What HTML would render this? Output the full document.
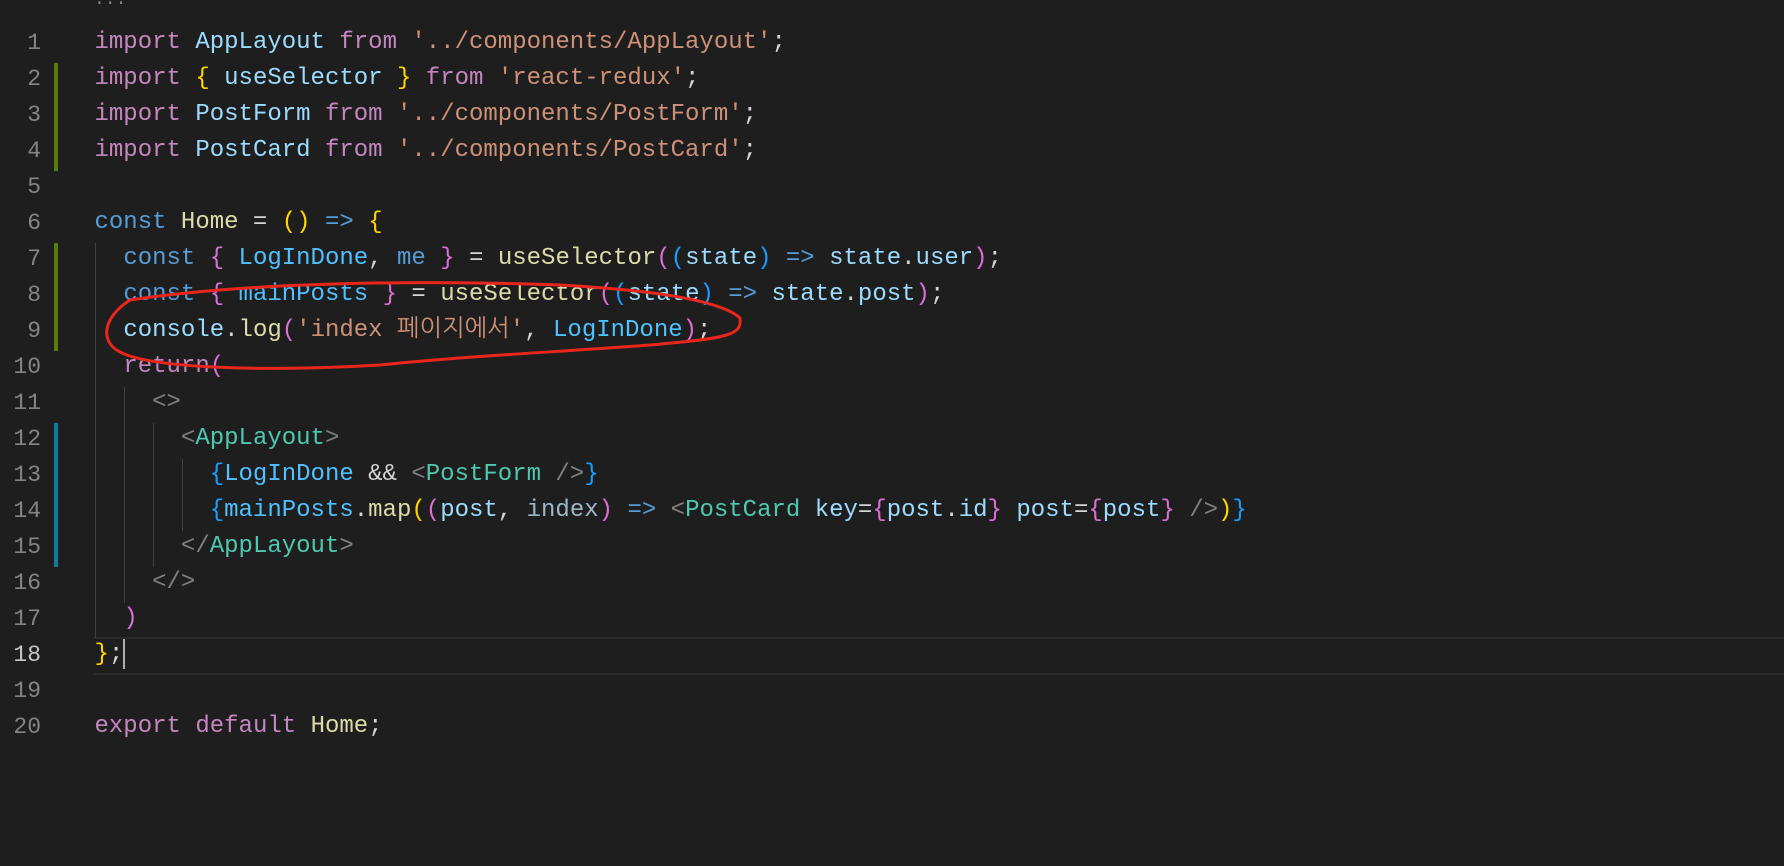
<!DOCTYPE html>
<html><head><meta charset="utf-8"><style>
html,body{margin:0;padding:0;background:#1e1e1e;width:1784px;height:866px;overflow:hidden}
.l{position:absolute;left:94.5px;height:36px;line-height:36px;font-family:"Liberation Mono","NanumGothic",monospace;font-size:24px;color:#d4d4d4;white-space:pre}
.n{position:absolute;left:0;width:41px;text-align:right;height:36px;line-height:36px;font-family:"Liberation Mono",monospace;font-size:23px;color:#858585}
.k{color:#c586c0}.v{color:#9cdcfe}.s{color:#ce9178}.c{color:#569cd6}.f{color:#dcdcaa}
.y{color:#ffd700}.p{color:#da70d6}.b{color:#179fff}.t{color:#4ec9b0}.g{color:#808080}.vv{color:#4fc1ff}
.bar{position:absolute;left:54px;width:4px}
.ig{position:absolute;width:1px;background:#404040}
</style></head><body>
<div style="position:absolute;left:94px;top:-10px;font-family:'Liberation Mono',monospace;font-size:18px;color:#858585">...</div>
<div style="position:absolute;left:94px;top:637px;width:1690px;height:34px;border-top:2px solid #2a2a2a;border-bottom:2px solid #2a2a2a"></div>
<div class="bar" style="top:63px;height:108px;background:#587c0c"></div>
<div class="bar" style="top:243px;height:108px;background:#587c0c"></div>
<div class="bar" style="top:423px;height:144px;background:#0c7d9d"></div>
<div class="ig" style="left:95px;top:243px;height:396px"></div>
<div class="ig" style="left:124px;top:387px;height:216px"></div>
<div class="ig" style="left:153px;top:423px;height:144px"></div>
<div class="ig" style="left:182px;top:459px;height:72px"></div>
<div class="n" style="top:25px">1</div><div class="n" style="top:61px">2</div><div class="n" style="top:97px">3</div><div class="n" style="top:133px">4</div><div class="n" style="top:169px">5</div><div class="n" style="top:205px">6</div><div class="n" style="top:241px">7</div><div class="n" style="top:277px">8</div><div class="n" style="top:313px">9</div><div class="n" style="top:349px">10</div><div class="n" style="top:385px">11</div><div class="n" style="top:421px">12</div><div class="n" style="top:457px">13</div><div class="n" style="top:493px">14</div><div class="n" style="top:529px">15</div><div class="n" style="top:565px">16</div><div class="n" style="top:601px">17</div><div class="n" style="top:637px;color:#c6c6c6">18</div><div class="n" style="top:673px">19</div><div class="n" style="top:709px">20</div>
<div class="l" style="top:25px"><span class="k">import</span> <span class="v">AppLayout</span> <span class="k">from</span> <span class="s">'../components/AppLayout'</span>;</div>
<div class="l" style="top:61px"><span class="k">import</span> <span class="y">{</span> <span class="v">useSelector</span> <span class="y">}</span> <span class="k">from</span> <span class="s">'react-redux'</span>;</div>
<div class="l" style="top:97px"><span class="k">import</span> <span class="v">PostForm</span> <span class="k">from</span> <span class="s">'../components/PostForm'</span>;</div>
<div class="l" style="top:133px"><span class="k">import</span> <span class="v">PostCard</span> <span class="k">from</span> <span class="s">'../components/PostCard'</span>;</div>
<div class="l" style="top:205px"><span class="c">const</span> <span class="f">Home</span> = <span class="y">()</span> <span class="c">=&gt;</span> <span class="y">{</span></div>
<div class="l" style="top:241px">  <span class="c">const</span> <span class="p">{</span> <span class="vv">LogInDone</span>, <span class="c">me</span> <span class="p">}</span> = <span class="f">useSelector</span><span class="p">(</span><span class="b">(</span><span class="v">state</span><span class="b">)</span> <span class="c">=&gt;</span> <span class="v">state</span>.<span class="v">user</span><span class="p">)</span>;</div>
<div class="l" style="top:277px">  <span class="c">const</span> <span class="p">{</span> <span class="vv">mainPosts</span> <span class="p">}</span> = <span class="f">useSelector</span><span class="p">(</span><span class="b">(</span><span class="v">state</span><span class="b">)</span> <span class="c">=&gt;</span> <span class="v">state</span>.<span class="v">post</span><span class="p">)</span>;</div>
<div class="l" style="top:313px">  <span class="v">console</span>.<span class="f">log</span><span class="p">(</span><span class="s">'index 페이지에서'</span>, <span class="vv">LogInDone</span><span class="p">)</span>;</div>
<div class="l" style="top:349px">  <span class="k">return</span><span class="p">(</span></div>
<div class="l" style="top:385px">    <span class="g">&lt;&gt;</span></div>
<div class="l" style="top:421px">      <span class="g">&lt;</span><span class="t">AppLayout</span><span class="g">&gt;</span></div>
<div class="l" style="top:457px">        <span class="b">{</span><span class="vv">LogInDone</span> &amp;&amp; <span class="g">&lt;</span><span class="t">PostForm</span> <span class="g">/&gt;</span><span class="b">}</span></div>
<div class="l" style="top:493px">        <span class="b">{</span><span class="vv">mainPosts</span>.<span class="f">map</span><span class="y">(</span><span class="p">(</span><span class="v">post</span>, <span class="v" style="color:#9cb8c8">index</span><span class="p">)</span> <span class="c">=&gt;</span> <span class="g">&lt;</span><span class="t">PostCard</span> <span class="v">key</span>=<span class="p">{</span><span class="v">post</span>.<span class="v">id</span><span class="p">}</span> <span class="v">post</span>=<span class="p">{</span><span class="v">post</span><span class="p">}</span> <span class="g">/&gt;</span><span class="y">)</span><span class="b">}</span></div>
<div class="l" style="top:529px">      <span class="g">&lt;/</span><span class="t">AppLayout</span><span class="g">&gt;</span></div>
<div class="l" style="top:565px">    <span class="g">&lt;/&gt;</span></div>
<div class="l" style="top:601px">  <span class="p">)</span></div>
<div class="l" style="top:637px"><span class="y">}</span>;<span style="display:inline-block;width:2px;height:30px;background:#aeafad;vertical-align:middle"></span></div>
<div class="l" style="top:709px"><span class="k">export</span> <span class="k">default</span> <span class="f">Home</span>;</div>
<svg style="position:absolute;left:0;top:0" width="1784" height="866">
<path d="M130,300 C250,282 420,280 560,285 C650,290 720,300 740,318 C742,335 730,338 650,345 C560,352 480,355 380,365 C260,372 150,368 120,352 C100,342 102,318 130,300" fill="none" stroke="#e8261c" stroke-width="3"/>
</svg>
</body></html>
